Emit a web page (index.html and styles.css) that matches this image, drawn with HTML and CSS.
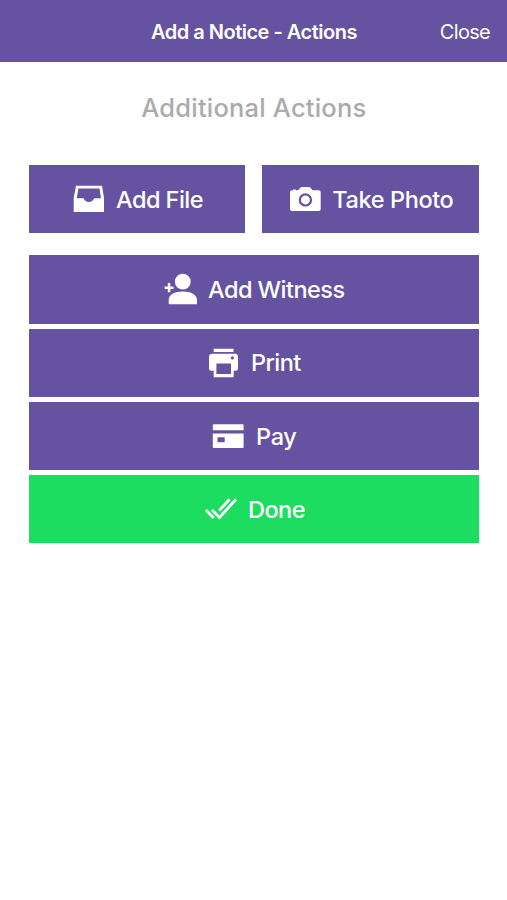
FILE: index.html
```html
<!DOCTYPE html>
<html lang="en">
<head>
<meta charset="utf-8">
<title>Add a Notice - Actions</title>
<link rel="stylesheet" href="styles.css">
</head>
<body>
<header class="bar">
  <h1 class="title">Add a Notice - Actions</h1>
  <button class="close">Close</button>
</header>
<main class="content">
  <h2 class="heading">Additional Actions</h2>
  <div class="pair">
    <button class="action file">
      <svg class="icon" viewBox="0 0 40 40"><path fill-rule="evenodd" d="M7 6.7H33L35 19V33H4.7V19ZM9.4 9.6L7.8 19.2H14.4C15.2 19.2 15.3 22.9 19.9 22.9S24.6 19.2 25.4 19.2H32L30.5 9.6Z"/></svg>
      <span>Add File</span>
    </button>
    <button class="action photo">
      <svg class="icon" viewBox="0 0 40 40"><path fill-rule="evenodd" d="M7 11.2H8V10.4H11V11.2H12.5C14.3 11.2 14.8 8 16.8 8H24C26 8 26.5 11.2 28.3 11.2H33.7Q35.7 11.2 35.7 13.2V30Q35.7 32 33.7 32H7Q5 32 5 30V13.2Q5 11.2 7 11.2ZM20.4 14.2A6.7 6.7 0 1 0 20.4 27.6A6.7 6.7 0 1 0 20.4 14.2ZM20.4 16.4A4.5 4.5 0 1 1 20.4 25.4A4.5 4.5 0 1 1 20.4 16.4Z"/></svg>
      <span>Take Photo</span>
    </button>
  </div>
  <div class="stack">
    <button class="action witness">
      <svg class="icon" viewBox="0 0 40 40"><circle cx="22.8" cy="12.7" r="7.9"/><path d="M8.7 35.3V31C8.7 26 14.5 22.6 22.8 22.6S37 26 37 31V35.3ZM7.8 14.1H10.3V17.5H13.5V20H10.3V23.3H7.8V20H4.6V17.5H7.8Z"/></svg>
      <span>Add Witness</span>
    </button>
    <button class="action print">
      <svg class="icon" viewBox="0 0 40 40"><path fill-rule="evenodd" d="M9.7 5.8H29.5V9H9.7ZM8 10.7H31Q34 10.7 34 13.7V25.6Q34 27.8 31.8 27.8H29.7V34.2H9.7V27.8H7.2Q5 27.8 5 25.6V13.7Q5 10.7 8 10.7ZM12.4 20.4V31.1H27V20.4ZM28.4 13.3A1.6 1.6 0 1 0 28.4 16.5A1.6 1.6 0 1 0 28.4 13.3Z"/></svg>
      <span>Print</span>
    </button>
    <button class="action pay">
      <svg class="icon" viewBox="0 0 40 40"><path fill-rule="evenodd" d="M6 8.2H34.6Q35.6 8.2 35.6 9.2V14.2H4.8V9.2Q4.8 8.2 6 8.2ZM4.8 17.4H35.6V30.9Q35.6 31.9 34.6 31.9H5.8Q4.8 31.9 4.8 30.9ZM9.5 21.3V26.3H16.7V21.3Z"/></svg>
      <span>Pay</span>
    </button>
    <button class="action done">
      <svg class="icon line" viewBox="0 0 40 40"><path d="M5 21L12.7 29M11 21L18.5 28.5L35 10.3M18.3 21.5L28.5 10.3"/></svg>
      <span>Done</span>
    </button>
  </div>
</main>
</body>
</html>
```
FILE: styles.css
```css
* { box-sizing: border-box; }
body {
  margin: 0;
  background: #fff;
  font-family: Inter, "Liberation Sans", sans-serif;
}
button {
  margin: 0;
  padding: 0;
  border: 0;
  background: none;
  color: #fff;
  font: inherit;
  text-align: left;
  white-space: nowrap;
}
.bar {
  display: flex;
  align-items: center;
  justify-content: space-between;
  height: 62px;
  padding: 1px 17px 0 151px;
  background: #6552a0;
  color: #fff;
}
.title {
  margin: 0;
  font-size: 20px;
  font-weight: 600;
  letter-spacing: -0.5px;
  white-space: nowrap;
}
.close {
  font-size: 20px;
  letter-spacing: -0.7px;
}
.content { padding: 0 28.3px 0 29px; }
.heading {
  margin: 30px 0 0;
  height: 73px;
  line-height: 32px;
  text-align: center;
  color: #ababab;
  font-size: 25.5px;
  font-weight: 500;
  letter-spacing: 0.2px;
}
.pair {
  display: grid;
  grid-template-columns: 1fr 1fr;
  gap: 17px;
  margin-bottom: 22px;
}
.stack {
  display: grid;
  gap: 5px;
}
.action {
  display: flex;
  align-items: center;
  height: 68.3px;
  background: #6552a0;
  font-size: 23.5px;
  font-weight: 500;
  letter-spacing: -0.55px;
}
.icon {
  flex: none;
  width: 40px;
  height: 40px;
  fill: #fff;
}
.line {
  fill: none;
  stroke: #fff;
  stroke-width: 2.8;
}
.file { padding-left: 40px; }
.file span { margin-left: 7px; }
.photo { padding-left: 23px; letter-spacing: -0.4px; }
.photo span { margin-left: 7px; }
.witness { padding-left: 131px; }
.witness span { margin-left: 8px; }
.print { padding-left: 175px; }
.print span { margin-left: 7px; }
.pay { padding-left: 179px; letter-spacing: -0.3px; }
.pay span { margin-left: 8px; }
.done { padding-left: 172px; background: #1ddd60; }
.done span { margin-left: 7px; }
```
